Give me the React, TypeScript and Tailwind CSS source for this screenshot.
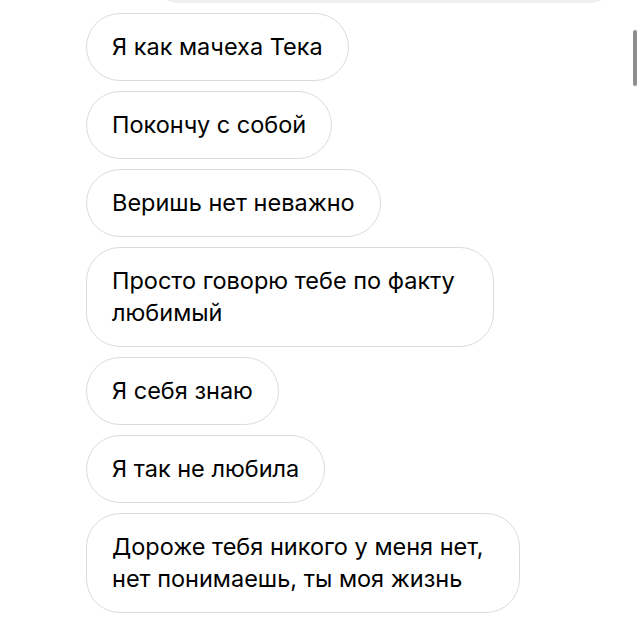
import React from "react";

const messages = [
  "Я как мачеха Тека",
  "Покончу с собой",
  "Веришь нет неважно",
  "Просто говорю тебе по факту любимый",
  "Я себя знаю",
  "Я так не любила",
  "Дороже тебя никого у меня нет, нет понимаешь, ты моя жизнь",
];

const widths: Record<number, string> = {
  3: "max-w-[408px]",
  6: "max-w-[434px]",
};

export default function App() {
  return (
    <div
      className="relative h-[619px] w-[640px] overflow-hidden bg-white text-black"
      style={{ fontFamily: "Inter, 'Noto Sans', sans-serif" }}
    >
      {/* partial sent message at the top */}
      <div className="ml-[146px] mr-[18px] -mt-[65px] h-[68px] rounded-[34px] bg-[#efefef]" />

      <div className="mt-[10px] flex flex-col items-start gap-[10px] pl-[86px]">
        {messages.map((m, i) => (
          <div
            key={i}
            className={`rounded-[34px] border border-[#dbdbdb] px-[25px] py-[17px] text-[23.5px] leading-[32px] ${
              widths[i] ?? ""
            }`}
          >
            {m}
          </div>
        ))}
      </div>

      {/* scrollbar */}
      <div className="absolute right-[3px] top-[30px] h-[56px] w-[4px] rounded-full bg-[#8e8e8e]" />
    </div>
  );
}
